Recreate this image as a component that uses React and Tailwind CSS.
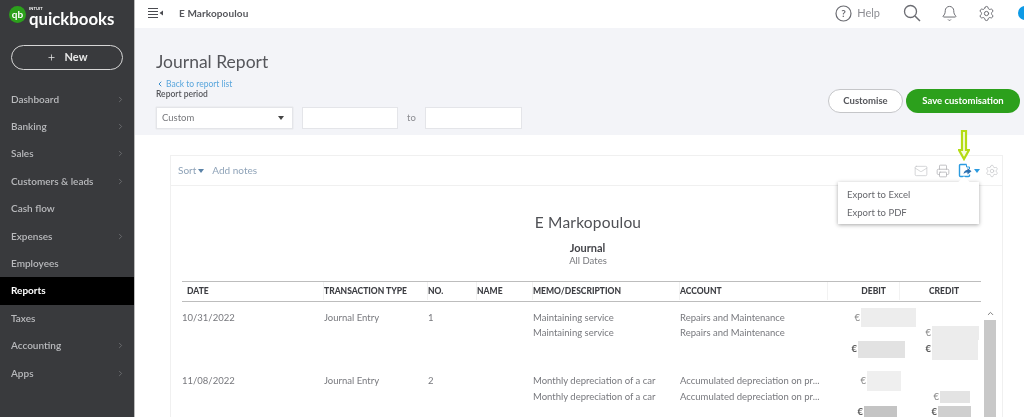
import React from "react";
import { ChevronRight, ChevronLeft, Bell, Settings, Mail, Printer, Plus, ChevronUp } from "lucide-react";

const nav = [
  ["Dashboard", true], ["Banking", true], ["Sales", true], ["Customers & leads", true], ["Cash flow", false],
  ["Expenses", true], ["Employees", false], ["Reports", false, true], ["Taxes", false], ["Accounting", true], ["Apps", true],
];

const cols = "grid grid-cols-[142px_104px_49px_56px_147px_148px_72px_82px]";

function Amt({ sym = "€", w, h, bold, mr, tone = "bg-[#ececec]" }) {
  return (
    <div className="flex items-center justify-end h-full" style={{ marginRight: mr }}>
      <span className={bold ? "font-bold text-[#555]" : "text-[#888]"}>{sym}</span>
      <span className={`block -my-4 ml-[1px] shrink-0 ${tone}`} style={{ width: w, height: h }} />
    </div>
  );
}

function Row({ date, type, no, memo, account, debit, credit, h = "h-[15.5px]" }) {
  return (
    <div className={`${cols} ${h} items-center text-[9.5px] text-[#77787d]`}>
      <div>{date}</div>
      <div>{type}</div>
      <div>{no}</div>
      <div />
      <div>{memo}</div>
      <div className="whitespace-nowrap">{account}</div>
      <div className="h-full">{debit}</div>
      <div className="h-full">{credit}</div>
    </div>
  );
}

export default function App() {
  return (
    <div className="w-[1024px] h-[417px] overflow-hidden flex bg-white blur-[0.5px] font-['Lato','Liberation_Sans',sans-serif] relative">
      <aside className="w-[135px] shrink-0 bg-[#393a3d] border-r border-[#bbb] flex flex-col">
        <div className="h-[28px] flex items-center pl-[9px] gap-[3px]">
          <div className="w-[17px] h-[17px] rounded-full bg-[#2ca01c] flex items-center justify-center text-white text-[10px] font-bold leading-none">qb</div>
          <div className="flex flex-col text-white pt-[3px]">
            <span className="text-[4px] font-bold tracking-wide h-[5px] leading-[5px]">INTUIT</span>
            <span className="text-[16.8px] font-bold h-[15px] leading-[15px]">quickbooks</span>
          </div>
        </div>
        <div className="mx-[11px] mt-[17px] h-[25px] rounded-full border-[1.5px] border-[#d6d6d6] flex items-center justify-center gap-[9px] text-[#e8e8e8] text-[11px] font-bold">
          <Plus size={9} strokeWidth={2} />
          <span>New</span>
        </div>
        <nav className="mt-[15.5px] flex flex-col">
          {nav.map(([label, arrow, active]) => (
            <div key={label} className={`h-[27.4px] pl-[11px] pr-[9px] flex items-center justify-between text-[10px] ${active ? "bg-black text-white font-bold" : "text-[#b9babd] font-semibold"}`}>
              <span>{label}</span>
              {arrow && <ChevronRight size={9} strokeWidth={2} className="text-[#77787b]" />}
            </div>
          ))}
        </nav>
      </aside>

      <main className="flex-1 flex flex-col min-w-0">
        <header className="h-[28px] bg-white flex items-center pl-[13px] pb-[2px]">
          <svg width="16" height="12" viewBox="0 0 16 12" className="text-[#4a4b50]">
            <path d="M0 1.5h10M0 4.5h10M0 7.5h10M0 10.5h10" stroke="currentColor" strokeWidth="1.2" />
            <path d="M15 3.5v5l-3.5-2.5z" fill="currentColor" />
          </svg>
          <span className="ml-[15px] text-[10px] font-bold text-[#55565b] tracking-[0.1px]">E Markopoulou</span>
          <div className="ml-auto flex items-center text-[#6b6c72]">
            <svg width="17" height="17" viewBox="0 0 17 17" fill="none" className="mr-[5px]">
              <circle cx="8.5" cy="8.5" r="7.5" stroke="#6b6c72" strokeWidth="1.2" />
              <text x="8.5" y="12" textAnchor="middle" fontSize="10" fontWeight="700" fill="#6b6c72">?</text>
            </svg>
            <span className="text-[11px] text-[#8d8e93] mr-[23px]">Help</span>
            <svg width="18" height="18" viewBox="0 0 18 18" fill="none" className="mr-[20px]">
              <circle cx="7.5" cy="7.5" r="6" stroke="#6b6c72" strokeWidth="1.3" />
              <path d="M12 12l5 5" stroke="#6b6c72" strokeWidth="1.5" />
            </svg>
            <Bell size={17} strokeWidth={1.4} className="mr-[20px]" />
            <Settings size={17} strokeWidth={1.4} className="mr-[23px]" />
            <div className="w-[14px] h-[14px] rounded-full bg-[#0d9ae6] -mr-[8px]" />
          </div>
        </header>

        <section className="h-[107px] bg-[#f3f4f8] pl-[21px] pr-[4px] flex justify-between items-end">
          <div className="flex flex-col">
            <h1 className="text-[17.5px] leading-[24px] text-[#55565b] font-normal">Journal Report</h1>
            <div className="mt-[5px] h-[10px] flex items-center text-[8.5px] text-[#5aa6dc]">
              <ChevronLeft size={8} strokeWidth={3} className="text-[#3d8fcc] mr-[2px]" />
              <span>Back to report list</span>
            </div>
            <div className="h-[10px] leading-[10px] text-[8.5px] font-semibold text-[#55565b]">Report period</div>
            <div className="mt-[8px] mb-[6px] flex items-center text-[9.5px] text-[#77787c]">
              <div className="w-[137px] h-[22px] bg-white border border-[#e4e5e9] shadow-[0_0_1px_#ccc] flex items-center justify-between pl-[5px] pr-[8px]">
                <span>Custom</span>
                <span className="w-0 h-0 border-x-[3.5px] border-x-transparent border-t-[4px] border-t-[#444]" />
              </div>
              <div className="ml-[9px] w-[96px] h-[22px] bg-white border border-[#e4e5e9]" />
              <span className="mx-[9px] text-[#8a8b90]">to</span>
              <div className="w-[97px] h-[22px] bg-white border border-[#e4e5e9]" />
            </div>
          </div>
          <div className="flex items-center gap-[3px] mb-[22px]">
            <div className="w-[75px] h-[24px] rounded-full border border-[#c5c6c9] bg-white flex items-center justify-center text-[9.5px] font-bold text-[#55565b]">Customise</div>
            <div className="w-[114px] h-[24px] rounded-full bg-[#2ca01c] flex items-center justify-center text-[9.5px] font-bold text-white">Save customisation</div>
          </div>
        </section>

        <section className="flex-1 pl-[35px] pr-[21px] pt-[20px] min-h-0">
          <div className="h-full border border-b-0 border-[#f0f0f0]">
            <div className="h-[30px] border-b border-[#f0f0f0] flex items-center pl-[7px] pr-[3px] text-[10px] text-[#8fa3b8]">
              <span>Sort</span>
              <span className="ml-[2px] w-0 h-0 border-x-[3px] border-x-transparent border-t-[4px] border-t-[#5b83a8]" />
              <span className="ml-[8px]">Add notes</span>
              <div className="ml-auto flex items-center">
                <Mail size={14} strokeWidth={1.2} className="text-[#c4c5c8] mr-[8px]" />
                <Printer size={14} strokeWidth={1.4} className="text-[#b5b6b9] mr-[8px]" />
                <svg width="15" height="15" viewBox="0 0 15 15" fill="none">
                  <path d="M8.5 1.5H2.5a1 1 0 0 0-1 1v10a1 1 0 0 0 1 1h8a1 1 0 0 0 1-1v-1" stroke="#2b9be0" strokeWidth="1.4" />
                  <path d="M8.5 1.5v2.5h3V6" stroke="#2b9be0" strokeWidth="1" />
                  <path d="M5.5 11c.4-2.6 2-4 4-4.2V5l4 3.2-4 3.2V9.5c-1.6 0-2.8.4-4 1.5z" fill="#2b6fb0" />
                </svg>
                <span className="ml-[1px] mr-[5px] w-0 h-0 border-x-[3.5px] border-x-transparent border-t-[4.5px] border-t-[#2b9be0]" />
                <Settings size={14} strokeWidth={1.2} className="text-[#c4c5c8]" />
              </div>
            </div>

            <div className="pl-[11px] pr-[21px]">
              <div className="text-center text-[#4f5055] text-[15.5px] leading-[20px] mt-[26px] pl-[13px] tracking-[0.2px]">E Markopoulou</div>
              <div className="text-center text-[11px] font-bold text-[#44454a] mt-[10px] leading-[12px] pl-[12px]">Journal</div>
              <div className="text-center text-[9.5px] text-[#77787c] leading-[13px] pl-[13px]">All Dates</div>

              <div className={`${cols} mt-[14px] h-[21px] items-stretch border-y border-[#bdbdbd] text-[8.5px] font-black text-[#3d3e43] pb-[1px]`}>
                <div className="pl-[5px] flex items-center border-r border-[#f2f2f2]">DATE</div>
                <div className="flex items-center border-r border-[#f2f2f2]">TRANSACTION TYPE</div>
                <div className="flex items-center border-r border-[#f2f2f2]">NO.</div>
                <div className="flex items-center border-r border-[#f2f2f2]">NAME</div>
                <div className="flex items-center border-r border-[#f2f2f2]">MEMO/DESCRIPTION</div>
                <div className="flex items-center border-r border-[#f2f2f2]">ACCOUNT</div>
                <div className="flex items-center justify-end pr-[13px] border-r border-[#f2f2f2]">DEBIT</div>
                <div className="flex items-center justify-center pl-[6px]">CREDIT</div>
              </div>

              <div className="pt-[8px]">
                <Row date="10/31/2022" type="Journal Entry" no="1" memo="Maintaining service" account="Repairs and Maintenance" debit={<Amt w={55} h={19} mr={-16} tone="bg-[#ededed]" />} />
                <Row memo="Maintaining service" account="Repairs and Maintenance" credit={<Amt w={47} h={14} mr={3} />} />
                <Row h="h-[16px]" debit={<Amt w={47} h={17} mr={-5} bold tone="bg-[#e2e2e2]" />} credit={<Amt w={46} h={21} mr={4} bold />} />
                <div className="h-[16.5px]" />
                <Row date="11/08/2022" type="Journal Entry" no="2" memo="Monthly depreciation of a car" account="Accumulated depreciation on pr..." debit={<Amt w={34} h={20} mr={-1} tone="bg-[#efefef]" />} />
                <Row memo="Monthly depreciation of a car" account="Accumulated depreciation on pr..." credit={<Amt w={30} h={12} mr={12} tone="bg-[#e3e3e3]" />} />
                <Row h="h-[16px]" debit={<Amt w={33} h={14} mr={3} bold tone="bg-[#c4c4c4]" />} credit={<Amt w={33} h={14} mr={11} bold tone="bg-[#cfcfcf]" />} />
              </div>
            </div>
          </div>
        </section>
      </main>

      {/* scrollbar over the report table */}
      <div className="absolute left-[984px] top-[306px] bottom-0 w-[12px] flex flex-col items-center">
        <ChevronUp size={9} strokeWidth={2.5} className="text-[#777] mt-[3px] mb-[2px]" />
        <div className="flex-1 w-full bg-[#c8c8c8]" />
      </div>

      {/* highlight arrow */}
      <svg width="12" height="31" viewBox="0 0 12 31" fill="none" className="absolute left-[958px] top-[130px]">
        <path d="M4 1h4v19h3l-5 9-5-9h3z" stroke="#b4dc14" strokeWidth="2.2" fill="#f6fbdc" />
      </svg>

      {/* export menu */}
      <div className="absolute left-[838px] top-[182px] w-[141px] h-[42px] bg-white shadow-[0_1px_4px_rgba(0,0,0,0.35)] flex flex-col justify-center pl-[9px] pt-[2px] text-[9.5px] text-[#66676c] leading-[18px]">
        <span className="absolute right-[11px] -top-[4px] w-[8px] h-[8px] rotate-45 bg-white" />
        <span>Export to Excel</span>
        <span>Export to PDF</span>
      </div>
    </div>
  );
}
